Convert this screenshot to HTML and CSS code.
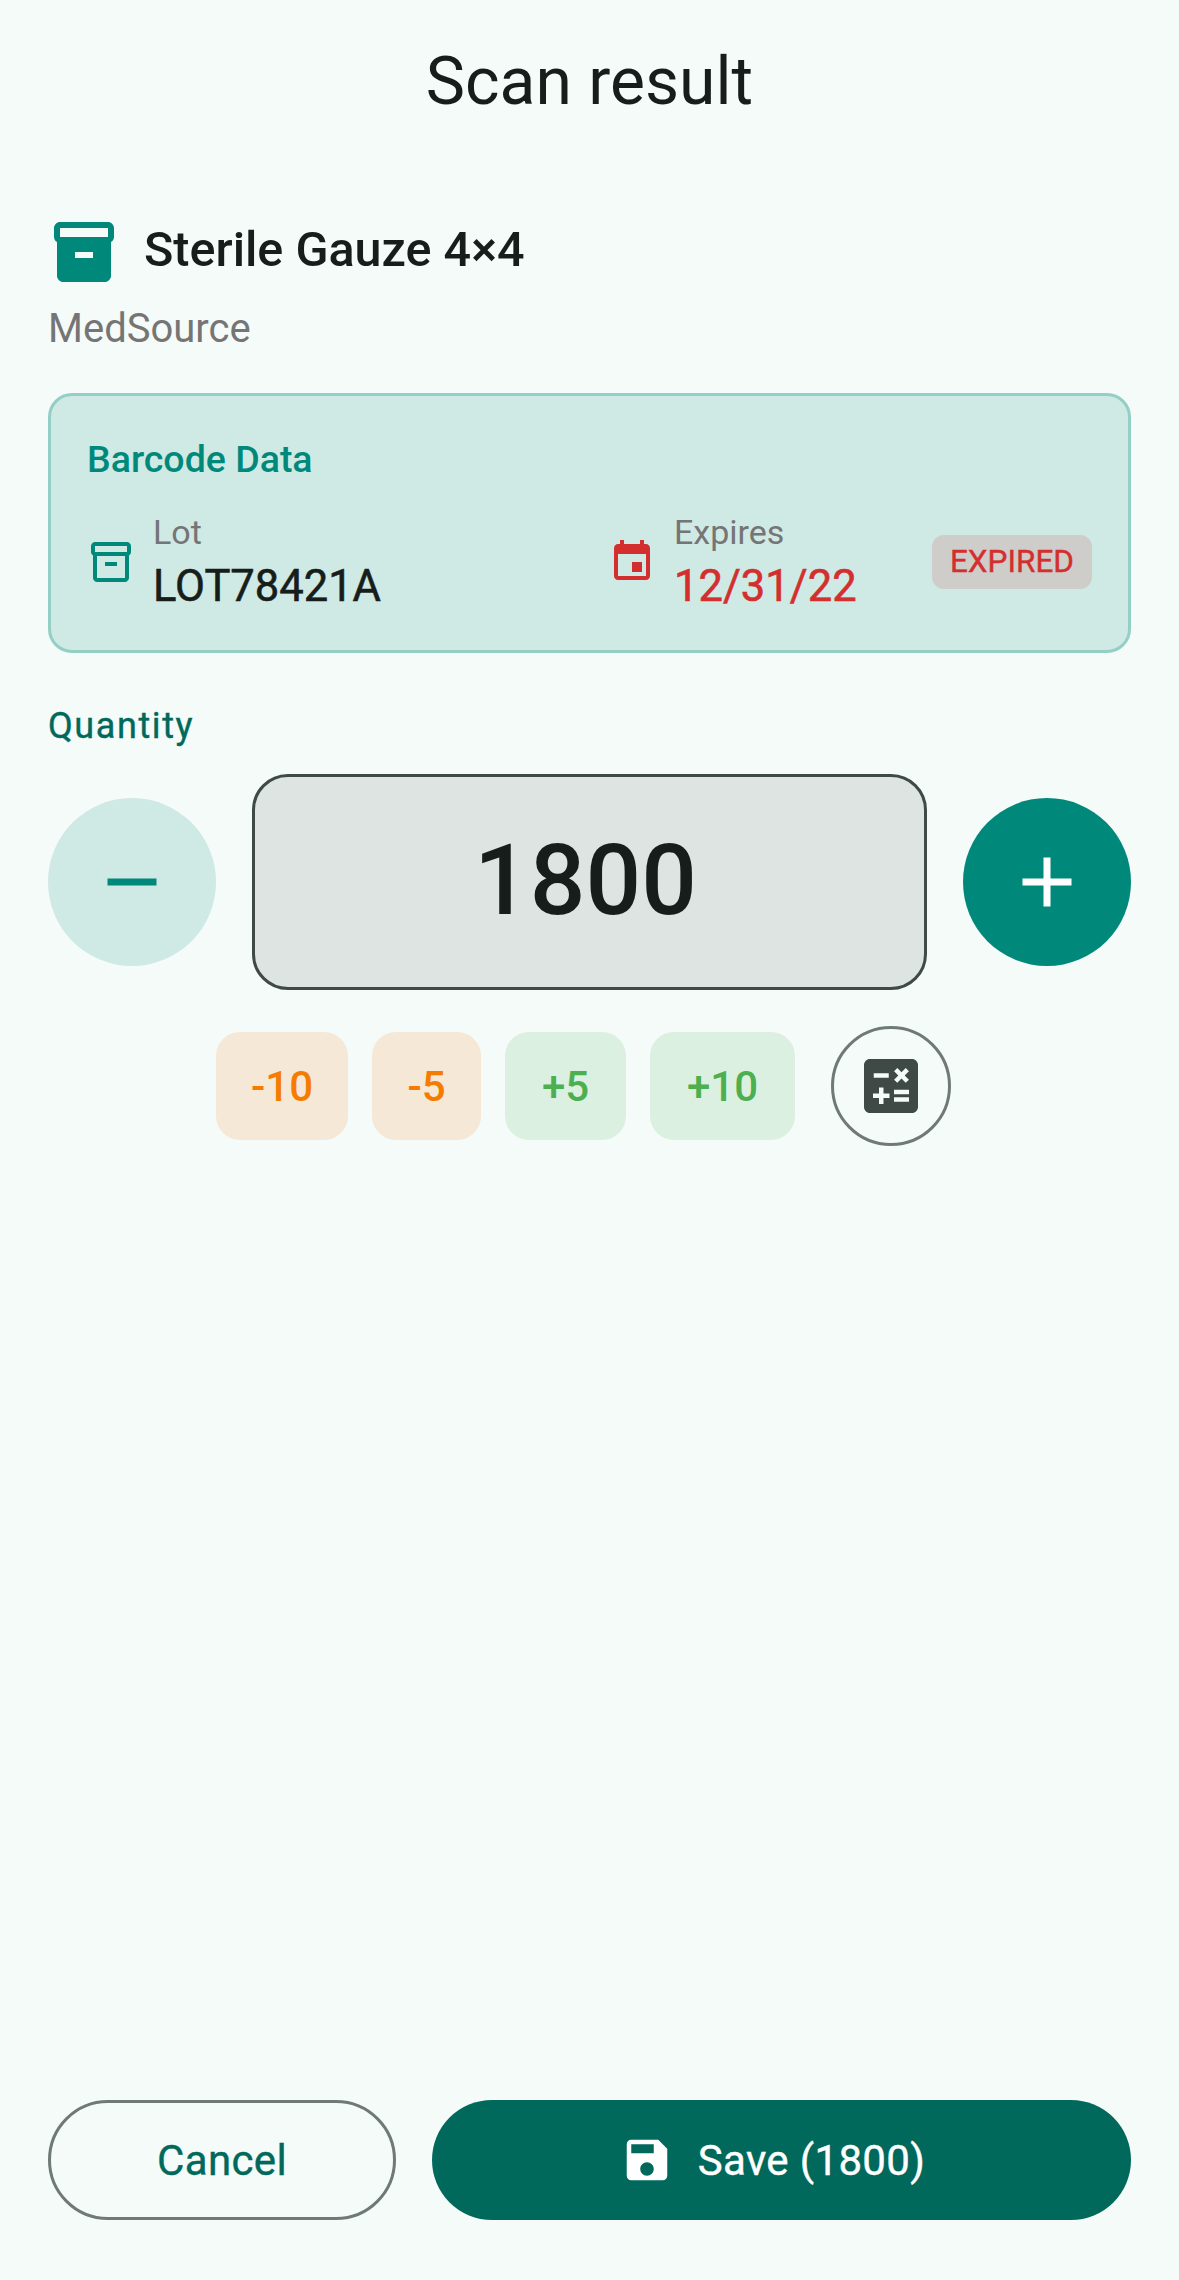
FILE: index.html
```html
<!DOCTYPE html>
<html lang="en">
<head>
    <meta charset="UTF-8">
    <meta name="viewport" content="width=device-width, initial-scale=1.0">
    <title>Scan result</title>
    <link rel="stylesheet" href="styles.css">
</head>
<body>
    <div class="screen">
        <h1 class="title">Scan result</h1>

        <div class="product">
            <svg class="icon-product" viewBox="0 0 24 24"><path d="M20 2H4c-1 0-2 .9-2 2v3.01c0 .72.43 1.34 1 1.69V20c0 1.1 1.1 2 2 2h14c.9 0 2-.9 2-2V8.7c.57-.35 1-.97 1-1.69V4c0-1.1-1-2-2-2zm-5 12H9v-2h6v2zm5-7H4V4h16v3z"/></svg>
            <span class="product-name">Sterile Gauze 4×4</span>
        </div>
        <div class="supplier">MedSource</div>

        <div class="card">
            <div class="card-title">Barcode Data</div>
            <div class="card-row">
                <div class="field field-lot">
                    <svg class="icon-small teal" viewBox="0 0 24 24"><path d="M20 2H4c-1 0-2 .9-2 2v3.01c0 .72.43 1.34 1 1.69V20c0 1.1 1.1 2 2 2h14c.9 0 2-.9 2-2V8.7c.57-.35 1-.97 1-1.69V4c0-1.1-1-2-2-2zm-1 18H5V9h14v11zm1-13H4V4h16v3z"/><path d="M9 12h6v2H9z"/></svg>
                    <div>
                        <div class="field-label">Lot</div>
                        <div class="field-value">LOT78421A</div>
                    </div>
                </div>
                <div class="field field-expiry">
                    <svg class="icon-small red" viewBox="0 0 24 24"><path d="M17 12h-5v5h5v-5zM16 1v2H8V1H6v2H5c-1.11 0-1.99.9-1.99 2L3 19c0 1.1.89 2 2 2h14c1.1 0 2-.9 2-2V5c0-1.1-.9-2-2-2h-1V1h-2zm3 18H5V8h14v11z"/></svg>
                    <div>
                        <div class="field-label">Expires</div>
                        <div class="field-value red-text">12/31/22</div>
                    </div>
                </div>
                <span class="badge">EXPIRED</span>
            </div>
        </div>

        <div class="qty-label">Quantity</div>
        <div class="qty-row">
            <button class="round round-minus">
                <svg class="icon-big" viewBox="0 0 24 24"><path d="M19 13H5v-2h14v2z"/></svg>
            </button>
            <div class="qty-value">1800</div>
            <button class="round round-plus">
                <svg class="icon-big" viewBox="0 0 24 24"><path d="M19 13h-6v6h-2v-6H5v-2h6V5h2v6h6v2z"/></svg>
            </button>
        </div>

        <div class="steps">
            <button class="step step-down step-10">-10</button>
            <button class="step step-down step-5">-5</button>
            <button class="step step-up step-5up">+5</button>
            <button class="step step-up step-10up">+10</button>
            <button class="calc">
                <svg class="icon-calc" viewBox="0 0 24 24"><path d="M19 3H5c-1.1 0-2 .9-2 2v14c0 1.1.9 2 2 2h14c1.1 0 2-.9 2-2V5c0-1.1-.9-2-2-2zm-5.97 4.06L14.09 6l1.41 1.41L16.91 6l1.06 1.06-1.41 1.41 1.41 1.41-1.06 1.06-1.41-1.4-1.41 1.41-1.06-1.06 1.41-1.41-1.41-1.42zm-6.78.66h5v1.5h-5v-1.5zM11.5 16h-2v2H8v-2H6v-1.5h2v-2h1.5v2h2V16zm6.5 1.25h-5v-1.5h5v1.5zm0-2.5h-5v-1.5h5v1.5z"/></svg>
            </button>
        </div>

        <div class="actions">
            <button class="btn btn-cancel">Cancel</button>
            <button class="btn btn-save">
                <svg class="icon-save" viewBox="0 0 24 24"><path d="M17 3H5c-1.11 0-2 .9-2 2v14c0 1.1.89 2 2 2h14c1.1 0 2-.9 2-2V7l-4-4zm-5 16c-1.66 0-3-1.34-3-3s1.34-3 3-3 3 1.34 3 3-1.34 3-3 3zm3-10H5V5h10v4z"/></svg>
                Save (1800)
            </button>
        </div>
    </div>
</body>
</html>
```

FILE: styles.css
```css
* {
    box-sizing: border-box;
}
body {
    margin: 0;
    background: #f5fbf8;
    color: #171d1b;
    font-family: Roboto, sans-serif;
}
button {
    font-family: inherit;
    border: none;
    padding: 0;
}
svg {
    display: block;
    fill: currentColor;
    flex-shrink: 0;
}
.screen {
    height: 2280px;
    padding: 0 48px 60px;
    display: flex;
    flex-direction: column;
}
.title {
    margin: 0;
    height: 160px;
    line-height: 164px;
    font-size: 66px;
    font-weight: 400;
    text-align: center;
}
.product {
    margin-top: 56px;
    height: 72px;
    display: flex;
    align-items: center;
    gap: 24px;
}
.icon-product {
    width: 72px;
    height: 72px;
    color: #00897b;
}
.product-name {
    font-size: 48.5px;
    font-weight: 500;
    line-height: 68px;
    height: 72px;
}
.supplier {
    margin-top: 13px;
    height: 56px;
    line-height: 56px;
    font-size: 40px;
    color: #757575;
}
.card {
    margin-top: 36px;
    height: 260px;
    padding: 35px 36px 0;
    background: #cfe9e4;
    border: 3px solid #94cfc6;
    border-radius: 24px;
}
.card-title {
    height: 56px;
    line-height: 56px;
    font-size: 37.5px;
    font-weight: 500;
    color: #00897b;
}
.card-row {
    margin-top: 22px;
    display: flex;
    align-items: center;
}
.field {
    display: flex;
    align-items: center;
    gap: 18px;
}
.field-lot {
    width: 521px;
}
.field-expiry {
    flex: 1;
}
.icon-small {
    width: 48px;
    height: 48px;
}
.teal {
    color: #00897b;
}
.red {
    color: #d32f2f;
}
.red-text {
    color: #d32f2f;
}
.field-label {
    height: 46px;
    line-height: 46px;
    font-size: 34px;
    color: #757575;
}
.field-value {
    height: 56px;
    margin-top: 4px;
    line-height: 56px;
    font-size: 43.5px;
    font-weight: 400;
    -webkit-text-stroke: 0.6px currentColor;
}
.badge {
    height: 54px;
    line-height: 54px;
    padding: 0 18px;
    border-radius: 12px;
    background: #cecdca;
    color: #d32f2f;
    font-size: 31.5px;
    font-weight: 400;
    -webkit-text-stroke: 0.4px currentColor;
}
.qty-label {
    margin-top: 50px;
    height: 46px;
    line-height: 46px;
    font-size: 36px;
    font-weight: 400;
    letter-spacing: 1.6px;
    color: #00695c;
    -webkit-text-stroke: 0.4px currentColor;
}
.qty-row {
    margin-top: 25px;
    display: flex;
    align-items: center;
    gap: 36px;
}
.round {
    width: 168px;
    height: 168px;
    border-radius: 50%;
    display: flex;
    align-items: center;
    justify-content: center;
    flex-shrink: 0;
}
.round-minus {
    background: #cfe9e4;
    color: #00897b;
}
.round-plus {
    background: #00897b;
    color: #fff;
}
.icon-big {
    width: 84px;
    height: 84px;
}
.qty-value {
    flex: 1;
    height: 216px;
    padding-right: 8px;
    line-height: 208px;
    text-align: center;
    font-size: 98px;
    font-weight: 500;
    background: #dde4e1;
    border: 3px solid #3f4946;
    border-radius: 36px;
}
.steps {
    margin-top: 36px;
    padding-right: 12px;
    display: flex;
    align-items: center;
    justify-content: center;
    gap: 24px;
}
.step {
    height: 108px;
    border-radius: 24px;
    font-size: 42px;
    font-weight: 500;
}
.step-10 {
    width: 132px;
}
.step-5 {
    width: 109px;
}
.step-5up {
    width: 121px;
}
.step-10up {
    width: 145px;
}
.step-down {
    background: #f5e8d6;
    color: #f57c00;
}
.step-up {
    background: #dcf0e1;
    color: #4caf50;
}
.calc {
    margin-left: 12px;
    width: 120px;
    height: 120px;
    border-radius: 50%;
    background: transparent;
    border: 3px solid #6f7976;
    color: #3f4946;
    display: flex;
    align-items: center;
    justify-content: center;
}
.icon-calc {
    width: 72px;
    height: 72px;
}
.actions {
    margin-top: auto;
    display: flex;
    gap: 36px;
}
.btn {
    height: 120px;
    border-radius: 60px;
    font-size: 42px;
    font-weight: 400;
    letter-spacing: 0.35px;
    -webkit-text-stroke: 0.4px currentColor;
    display: flex;
    align-items: center;
    justify-content: center;
}
.btn-cancel {
    width: 348px;
    background: transparent;
    border: 3px solid #6f7976;
    color: #00695c;
}
.btn-save {
    flex: 1;
    gap: 24px;
    padding-right: 18px;
    background: #00695c;
    color: #fff;
}
.icon-save {
    width: 54px;
    height: 54px;
}
```
